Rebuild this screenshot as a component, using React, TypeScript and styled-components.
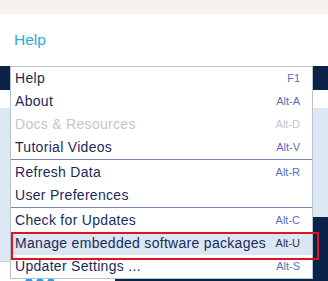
import React from 'react';
import styled, { createGlobalStyle } from 'styled-components';

type MenuEntry = {
  label: string;
  shortcut?: string;
  disabled?: boolean;
  active?: boolean;
};

const groups: MenuEntry[][] = [
  [
    { label: 'Help', shortcut: 'F1' },
    { label: 'About', shortcut: 'Alt-A' },
    { label: 'Docs & Resources', shortcut: 'Alt-D', disabled: true },
    { label: 'Tutorial Videos', shortcut: 'Alt-V' },
  ],
  [
    { label: 'Refresh Data', shortcut: 'Alt-R' },
    { label: 'User Preferences' },
  ],
  [
    { label: 'Check for Updates', shortcut: 'Alt-C' },
    { label: 'Manage embedded software packages', shortcut: 'Alt-U', active: true },
    { label: 'Updater Settings ...', shortcut: 'Alt-S' },
  ],
];

const GlobalStyle = createGlobalStyle`
  html, body {
    margin: 0;
    padding: 0;
    background: #fff;
  }
  body {
    font-family: "Liberation Sans", Arial, sans-serif;
  }
`;

// only the top edge of the product logo peeks out below the menu
const LogoPeek: React.FC = () => (
  <svg width="34" height="8" viewBox="0 0 34 8">
    <path d="M1 8 L5 1 L9 1 L13 8 Z" fill="#2d9be0" />
    <path d="M12 8 L16 1 L20 1 L24 8 Z" fill="#2d9be0" />
    <path d="M23 8 L27 1 L31 1 L34 8 Z" fill="#2d9be0" />
  </svg>
);

const App: React.FC = () => {
  return (
    <>
      <GlobalStyle />
      <Page>
        <TopStrip />
        <Header>
          <TabLabel>Help</TabLabel>
        </Header>
        <NavBand />
        <Gap />
        <Content>
          <LeftColumn>
            <InfoPanel />
            <Footnote>
              <LogoPeek />
            </Footnote>
          </LeftColumn>
          <RightColumn>
            <InfoPanel />
            <DarkPanel />
          </RightColumn>
        </Content>

        <Menu>
          {groups.map((group, gi) => (
            <Group key={gi} separated={gi > 0}>
              {group.map((item) => (
                <Item key={item.label} active={item.active}>
                  <ItemLabel disabled={item.disabled}>{item.label}</ItemLabel>
                  {item.shortcut && (
                    <Shortcut disabled={item.disabled} active={item.active}>
                      {item.shortcut}
                    </Shortcut>
                  )}
                </Item>
              ))}
            </Group>
          ))}
        </Menu>
        <Highlight />
      </Page>
    </>
  );
};

export default App;

const Page = styled.div`
  position: relative;
  width: 328px;
  height: 281px;
  overflow: hidden;
  display: flex;
  flex-direction: column;

  & > * {
    flex-shrink: 0;
  }
`;

const TopStrip = styled.div`
  height: 14px;
  background: #f8f0ea;
`;

const Header = styled.div`
  height: 52px;
  background: #fff;
  display: flex;
  align-items: center;
  padding-left: 14px;
  box-sizing: border-box;
`;

const TabLabel = styled.span`
  font-size: 15.5px;
  color: #2aa9e2;
`;

const NavBand = styled.div`
  height: 24px;
  background: #0b2249;
`;

const Gap = styled.div`
  height: 18px;
  background: #fff;
`;

const Content = styled.div`
  height: 173px;
  display: grid;
  grid-template-columns: 115px 1fr;
  overflow: hidden;
`;

const LeftColumn = styled.div`
  display: grid;
  grid-template-rows: 153px 20px;
`;

const RightColumn = styled.div`
  display: grid;
  grid-template-rows: 109px 64px;
`;

const InfoPanel = styled.div`
  background: #dce9f5;
`;

const Footnote = styled.div`
  border-top: 1px solid #c9d2da;
  background: #fff;
  padding: 15px 0 0 22px;
  line-height: 0;
  overflow: hidden;
`;

const DarkPanel = styled.div`
  background: #0b2249;
`;

const Menu = styled.div`
  position: absolute;
  left: 10px;
  top: 66px;
  width: 303px;
  box-sizing: border-box;
  background: #fff;
  border: 1px solid #b7c2cc;
  display: flex;
  flex-direction: column;
`;

const Group = styled.div<{ separated?: boolean }>`
  display: flex;
  flex-direction: column;
  border-top: ${(p) => (p.separated ? '1px solid #7386b6' : 'none')};
  padding-top: ${(p) => (p.separated ? '1px' : '0')};
`;

const Item = styled.div<{ active?: boolean }>`
  height: 23px;
  display: flex;
  align-items: center;
  justify-content: space-between;
  padding: 0 12px 0 4px;
  background: ${(p) => (p.active ? '#dae7f3' : '#fff')};
`;

const ItemLabel = styled.span<{ disabled?: boolean }>`
  font-size: 14px;
  line-height: 17px;
  letter-spacing: 0.3px;
  color: ${(p) => (p.disabled ? '#c3c6ca' : '#1b2b5a')};
  white-space: nowrap;
`;

const Shortcut = styled.span<{ disabled?: boolean; active?: boolean }>`
  font-size: 11px;
  line-height: 13px;
  color: ${(p) => (p.disabled ? '#c3c6d2' : p.active ? '#2e3350' : '#5a6dc0')};
  white-space: nowrap;
`;

const Highlight = styled.div`
  position: absolute;
  left: 11px;
  top: 232px;
  width: 308px;
  height: 28px;
  box-sizing: border-box;
  border: 2px solid #e3131e;
  pointer-events: none;
`;
